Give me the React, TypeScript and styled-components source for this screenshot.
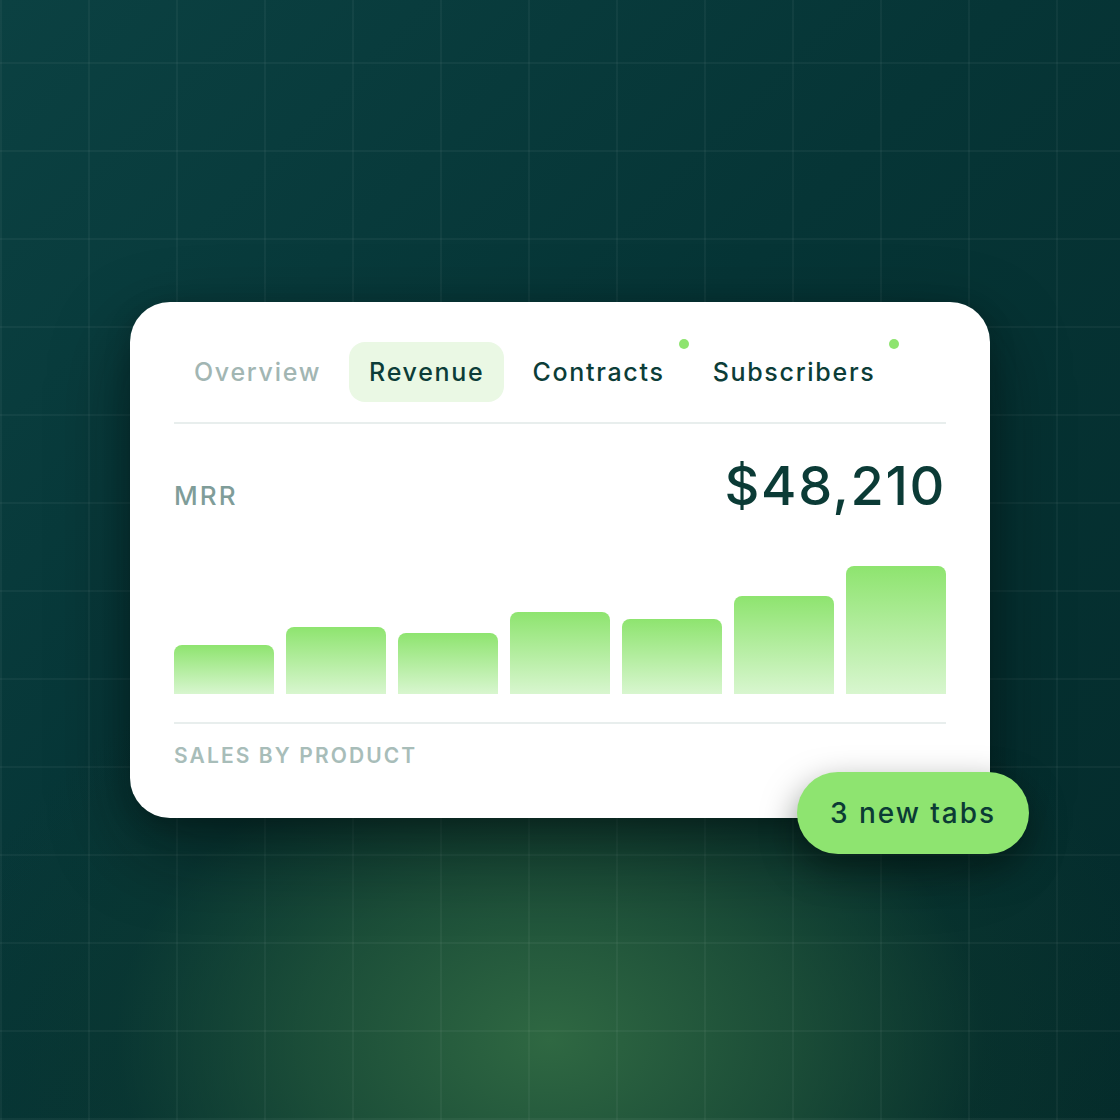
import React from "react";
import styled, { createGlobalStyle } from "styled-components";

const GlobalStyle = createGlobalStyle`
  * { box-sizing: border-box; }
  html, body { margin: 0; padding: 0; }
  body {
    font-family: Inter, "Noto Sans", "Liberation Sans", sans-serif;
    -webkit-font-smoothing: antialiased;
  }
`;

const Page = styled.div`
  width: 1120px;
  height: 1120px;
  display: flex;
  align-items: center;
  justify-content: center;
  overflow: hidden;
  background-color: #063334;
  background-image:
    linear-gradient(to right, rgba(255, 255, 255, 0.04) 2px, transparent 2px),
    linear-gradient(to bottom, rgba(255, 255, 255, 0.04) 2px, transparent 2px),
    radial-gradient(ellipse 620px 440px at 550px 1040px, rgba(47, 104, 66, 1) 0%, rgba(34, 86, 58, 0.75) 40%, rgba(16, 60, 46, 0.3) 70%, rgba(10, 50, 44, 0) 100%),
    linear-gradient(135deg, #0b4142 0%, #063536 45%, #042b2b 100%);
  background-size: 88px 88px, 88px 88px, 100% 100%, 100% 100%;
  background-position: 0 0, 0 62px, 0 0, 0 0;
`;

const Card = styled.div`
  position: relative;
  width: 860px;
  background: #ffffff;
  border-radius: 40px;
  padding: 40px 44px 52px;
  box-shadow: 0 30px 80px rgba(0, 12, 10, 0.45), 0 8px 24px rgba(0, 12, 10, 0.25);
`;

const TabBar = styled.div`
  display: flex;
  align-items: center;
  gap: 8px;
`;

const Tab = styled.div<{ $active?: boolean; $muted?: boolean }>`
  position: relative;
  height: 60px;
  padding: 0 20px;
  display: flex;
  align-items: center;
  border-radius: 16px;
  font-size: 25px;
  font-weight: 500;
  letter-spacing: 0.068em;
  color: ${(p) => (p.$muted ? "#a2b6b3" : "#0c3d38")};
  background: ${(p) => (p.$active ? "#eaf8e4" : "transparent")};
`;

const Dot = styled.span`
  position: absolute;
  top: -3px;
  right: -4px;
  width: 10px;
  height: 10px;
  border-radius: 50%;
  background: #8ee46f;
`;

const Divider = styled.div<{ $gap: number }>`
  height: 2px;
  background: #e8eeed;
  margin-top: ${(p) => p.$gap}px;
`;

const MetricRow = styled.div`
  display: flex;
  justify-content: space-between;
  align-items: baseline;
  margin-top: 35px;
`;

const MetricLabel = styled.span`
  font-size: 26px;
  font-weight: 500;
  letter-spacing: 0.08em;
  color: #7f9d99;
`;

const MetricValue = styled.span`
  font-size: 54px;
  line-height: 54px;
  font-weight: 500;
  letter-spacing: 0.03em;
  color: #0b3b36;
`;

const Chart = styled.div`
  display: flex;
  align-items: flex-end;
  gap: 12px;
  height: 128px;
  margin-top: 53px;
`;

const Bar = styled.div`
  flex: 1;
  border-radius: 8px 8px 0 0;
  background: linear-gradient(to bottom, #8ee46f 0%, #d8f6cf 100%);
`;

const SectionLabel = styled.div`
  margin-top: 21px;
  font-size: 21px;
  line-height: 21px;
  font-weight: 600;
  letter-spacing: 0.1em;
  color: #a8bdb9;
  text-transform: uppercase;
`;

const Badge = styled.div`
  position: absolute;
  right: -39px;
  bottom: -36px;
  width: 232px;
  height: 82px;
  border-radius: 41px;
  background: #8ee470;
  display: flex;
  align-items: center;
  justify-content: center;
  font-size: 28px;
  font-weight: 500;
  letter-spacing: 0.07em;
  color: #0b3b35;
  box-shadow: 0 14px 34px rgba(0, 14, 10, 0.5);
`;

const tabs = [
  { label: "Overview", muted: true },
  { label: "Revenue", active: true },
  { label: "Contracts", dot: true },
  { label: "Subscribers", dot: true },
];

const bars = [49, 67, 61, 82, 75, 98, 128];

export default function App() {
  return (
    <>
      <GlobalStyle />
      <Page>
        <Card>
          <TabBar>
            {tabs.map((t) => (
              <Tab key={t.label} $active={t.active} $muted={t.muted}>
                {t.label}
                {t.dot && <Dot />}
              </Tab>
            ))}
          </TabBar>
          <Divider $gap={20} />
          <MetricRow>
            <MetricLabel>MRR</MetricLabel>
            <MetricValue>$48,210</MetricValue>
          </MetricRow>
          <Chart>
            {bars.map((h, i) => (
              <Bar key={i} style={{ height: `${h}px` }} />
            ))}
          </Chart>
          <Divider $gap={28} />
          <SectionLabel>Sales by product</SectionLabel>
          <Badge>3 new tabs</Badge>
        </Card>
      </Page>
    </>
  );
}
